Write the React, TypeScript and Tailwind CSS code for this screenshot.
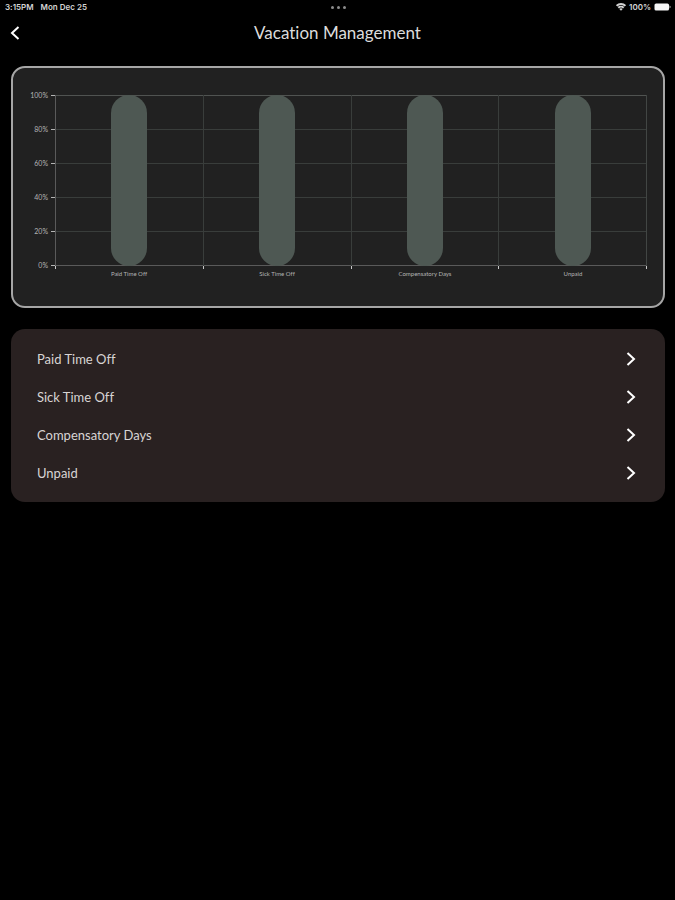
import { ReactNode } from 'react';

const categories = [
  { id: 'pto', label: 'Paid Time Off', value: 100 },
  { id: 'sick', label: 'Sick Time Off', value: 100 },
  { id: 'comp', label: 'Compensatory Days', value: 100 },
  { id: 'unpaid', label: 'Unpaid', value: 100 },
];

const ticks = ['100%', '80%', '60%', '40%', '20%', '0%'];

const Chevron = ({ d }: { d: string }) => (
  <svg
    width="10"
    height="14"
    viewBox="0 0 10 14"
    fill="none"
    stroke="currentColor"
    strokeWidth="2"
    aria-hidden="true"
  >
    <path d={d} />
  </svg>
);

const StatusBar = () => (
  <div className="grid grid-cols-3 items-center h-[14px] pl-[5px] pr-1 font-['Inter','Liberation_Sans',sans-serif] text-[8px] leading-[14px] font-semibold text-[#d4d4d4]">
    <div className="flex gap-[7px]">
      <span>3:15PM</span>
      <span>Mon Dec 25</span>
    </div>
    <div className="flex justify-center gap-[3px]">
      <span className="size-[3px] rounded-full bg-[#8c8c8c]" />
      <span className="size-[3px] rounded-full bg-[#8c8c8c]" />
      <span className="size-[3px] rounded-full bg-[#8c8c8c]" />
    </div>
    <div className="flex items-center justify-end gap-[3px]">
      <svg width="10" height="8" viewBox="0 0 10 8" fill="none" stroke="currentColor" aria-hidden="true">
        <path d="M0.6 2.8C3 0.4 7 0.4 9.4 2.8" strokeWidth="1.9" />
        <path d="M2.3 4.7C3.8 3.3 6.2 3.3 7.7 4.7" strokeWidth="1.9" />
        <path d="M5 7.8L3.3 6C4.2 5.1 5.8 5.1 6.7 6Z" fill="currentColor" stroke="none" />
      </svg>
      <span>100%</span>
      <svg width="17" height="8" viewBox="0 0 17 8" fill="#f5f5f5" aria-hidden="true">
        <rect x="0.5" y="0.5" width="14.5" height="7" rx="1.6" />
        <path d="M15.6 2.6C16.8 3 16.8 5 15.6 5.4Z" />
      </svg>
    </div>
  </div>
);

const Header = ({ children }: { children: ReactNode }) => (
  <header className="grid grid-cols-[40px_1fr_40px] items-center h-[38px]">
    <button type="button" aria-label="Back" className="flex items-center h-full pl-[10px] text-white">
      <Chevron d="M8.5 1L2 7L8.5 13" />
    </button>
    <h1 className="text-center text-[17px] leading-[24px] text-[#dcdcdc]">{children}</h1>
  </header>
);

const BalanceChart = () => (
  <section
    aria-label="Balance by leave type"
    className="flex pt-[10px] pb-6 pr-4 rounded-[14px] border-2 border-[#a6a6a6] bg-[#212121] text-[#b4b4b4]"
  >
    <div className="w-[42px] shrink-0">
      {ticks.map((tick) => (
        <div key={tick} className="flex items-center justify-end gap-[3px] h-[34px] text-[7px] leading-[8px]">
          <span>{tick}</span>
          <span className="w-1 h-px bg-[#b4b4b4]" />
        </div>
      ))}
    </div>

    <div className="flex-1 pt-[17px]">
      <div className="grid h-[171px]">
        <div className="col-start-1 row-start-1 grid grid-rows-5 border-b border-[#5a5a5a]">
          {ticks.slice(1).map((tick) => (
            <div key={tick} className="border-t border-[#393d3b] first:border-[#505351]" />
          ))}
        </div>
        <div className="col-start-1 row-start-1 grid grid-cols-4 border-r border-[#424644]">
          {categories.map((cat) => (
            <div
              key={cat.id}
              className="flex items-end justify-center border-l border-[#393d3b] first:border-[#5a5a5a]"
            >
              <div className="w-9 rounded-full bg-[#4e5853]" style={{ height: `${cat.value}%` }} />
            </div>
          ))}
        </div>
      </div>
      <div className="flex justify-between h-[3px]">
        {ticks.slice(1).map((tick) => (
          <span key={tick} className="w-px h-[3px] bg-[#c8c8c8]" />
        ))}
      </div>
      <div className="grid grid-cols-4 text-center text-[6px] leading-[10px]">
        {categories.map((cat) => (
          <span key={cat.id}>{cat.label}</span>
        ))}
      </div>
    </div>
  </section>
);

const LeaveList = () => (
  <ul className="mt-[21px] pt-[11px] pb-[10px] rounded-[14px] bg-[#292121]">
    {categories.map((cat) => (
      <li key={cat.id}>
        <a
          href={`#${cat.id}`}
          className="flex items-center justify-between h-[38px] pl-[26px] pr-[29px] text-[13px] leading-[18px] text-[#d8d4d4]"
        >
          {cat.label}
          <span className="text-white">
            <Chevron d="M1.5 1L8 7L1.5 13" />
          </span>
        </a>
      </li>
    ))}
  </ul>
);

const App = () => (
  <div className="min-h-screen bg-black font-['Lato','Liberation_Sans',sans-serif] [font-variant-ligatures:none]">
    <StatusBar />
    <Header>Vacation Management</Header>
    <main className="pl-[11px] pr-[10px] pt-[14px]">
      <BalanceChart />
      <LeaveList />
    </main>
  </div>
);

export default App;
